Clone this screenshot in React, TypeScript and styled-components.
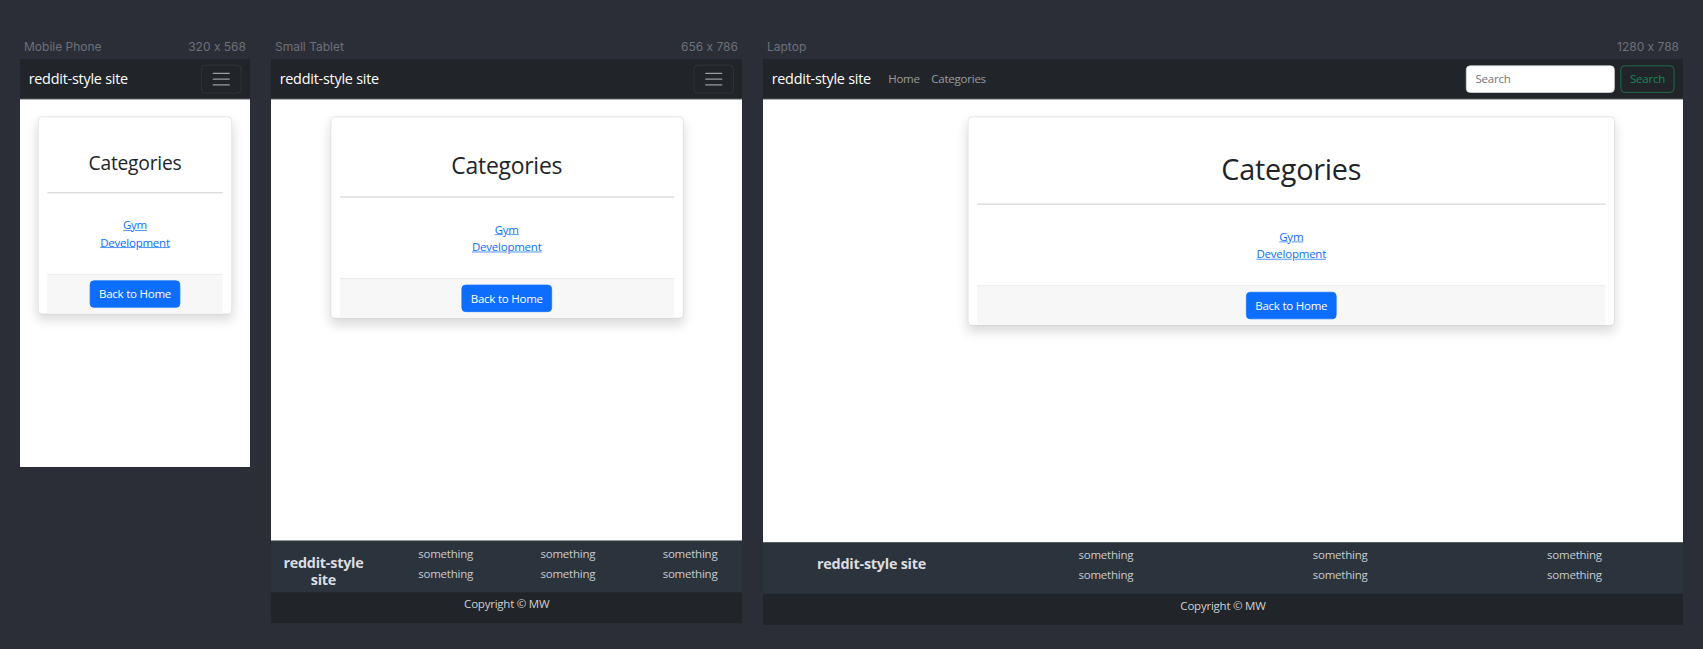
import styled, { createGlobalStyle } from "styled-components";

type Kind = "mobile" | "tablet" | "laptop";

interface IDevice {
  name: string;
  w: number;
  h: number;
  kind: Kind;
}

const SCALE = 0.71875;

const devices: IDevice[] = [
  { name: "Mobile Phone", w: 320, h: 568, kind: "mobile" },
  { name: "Small Tablet", w: 656, h: 786, kind: "tablet" },
  { name: "Laptop", w: 1280, h: 788, kind: "laptop" },
];

// per-device numbers taken from the bootstrap page at each width
const headingSize: Record<Kind, number> = {
  mobile: 26.8,
  tablet: 31.84,
  laptop: 40,
};

const cardWidth: Record<Kind, number> = {
  mobile: 270,
  tablet: 491,
  laptop: 900,
};

const categories = ["Gym", "Development"];

export default function App() {
  return (
    <>
      <GlobalStyle />
      <Workspace>
        {devices.map((d) => (
          <DeviceColumn key={d.name} $w={d.w}>
            <DeviceLabel>
              <span>{d.name}</span>
              <span>
                {d.w} x {d.h}
              </span>
            </DeviceLabel>
            <Screen $w={d.w} $h={d.h}>
              <Viewport $w={d.w} $h={d.h}>
                <SitePage device={d} />
              </Viewport>
            </Screen>
          </DeviceColumn>
        ))}
      </Workspace>
    </>
  );
}

function SitePage({ device }: { device: IDevice }) {
  const wide = device.kind === "laptop";
  return (
    <>
      <Navbar>
        <Brand href="#">reddit-style site</Brand>
        {wide ? (
          <>
            <NavLinks>
              <NavLink href="#">Home</NavLink>
              <NavLink href="#">Categories</NavLink>
            </NavLinks>
            <SearchForm onSubmit={(e) => e.preventDefault()}>
              <SearchInput type="search" placeholder="Search" />
              <SearchBtn type="submit">Search</SearchBtn>
            </SearchForm>
          </>
        ) : (
          <Toggler type="button" aria-label="Toggle navigation">
            <svg width="30" height="30" viewBox="0 0 30 30">
              <path
                d="M4 7h22M4 15h22M4 23h22"
                stroke="rgba(255,255,255,0.55)"
                strokeWidth="2"
                strokeLinecap="round"
              />
            </svg>
          </Toggler>
        )}
      </Navbar>

      <Main>
        <Card $width={cardWidth[device.kind]} $offset={wide ? 285 : null}>
          <CardHeader>
            <Title $size={headingSize[device.kind]}>Categories</Title>
          </CardHeader>
          <Rule />
          <CardBody>
            <CategoryList>
              {categories.map((c) => (
                <li key={c}>
                  <CategoryLink href="#">{c}</CategoryLink>
                </li>
              ))}
            </CategoryList>
          </CardBody>
          <CardFooter>
            <PrimaryBtn type="button">Back to Home</PrimaryBtn>
          </CardFooter>
        </Card>
      </Main>

      {device.kind !== "mobile" && (
        <SiteFooter>
          <FooterRow>
            <FooterBrand>reddit-style site</FooterBrand>
            {[0, 1, 2].map((i) => (
              <FooterCol key={i}>
                <FooterItem>something</FooterItem>
                <FooterItem>something</FooterItem>
              </FooterCol>
            ))}
          </FooterRow>
          <Copyright>Copyright © MW</Copyright>
        </SiteFooter>
      )}
    </>
  );
}

const GlobalStyle = createGlobalStyle`
  html, body {
    margin: 0;
    background: #2b2e37;
  }
  * {
    box-sizing: border-box;
  }
`;

/* ---------- Preview shell ---------- */

const Workspace = styled.div`
  display: flex;
  align-items: flex-start;
  gap: 21px;
  padding: 39px 20px 0 20px;
  min-height: 649px;
`;

const DeviceColumn = styled.div<{ $w: number }>`
  display: flex;
  flex-direction: column;
  gap: 4px;
  width: ${({ $w }) => Math.floor($w * SCALE)}px;
  flex-shrink: 0;
`;

const DeviceLabel = styled.div`
  display: flex;
  justify-content: space-between;
  padding: 0 4px;
  height: 16px;
  line-height: 16px;
  font-family: Inter, "Noto Sans", sans-serif;
  font-size: 12px;
  font-feature-settings: "calt" 0;
  color: #6d707a;
`;

const Screen = styled.div<{ $w: number; $h: number }>`
  width: ${({ $w }) => Math.floor($w * SCALE)}px;
  height: ${({ $h }) => Math.floor($h * SCALE)}px;
  overflow: hidden;
  background: #fff;
`;

const Viewport = styled.div<{ $w: number; $h: number }>`
  width: ${({ $w }) => $w}px;
  height: ${({ $h }) => $h}px;
  transform: scale(${SCALE});
  transform-origin: 0 0;
  overflow: hidden;
  display: flex;
  flex-direction: column;
  background: #fff;
  font-family: "Open Sans", "Noto Sans", sans-serif;
  font-size: 16px;
  line-height: 1.5;
  letter-spacing: -0.02em;
  color: #212529;
`;

/* ---------- Navbar ---------- */

const Navbar = styled.nav`
  display: flex;
  align-items: center;
  height: 56px;
  padding: 8px 12px;
  background: #212529;
  border-bottom: 1px solid #5c6066;
  flex-shrink: 0;
`;

const Brand = styled.a`
  font-size: 20px;
  line-height: 30px;
  color: #fff;
  text-decoration: none;
  margin-right: 16px;
  white-space: nowrap;
`;

const NavLinks = styled.div`
  display: flex;
`;

const NavLink = styled.a`
  padding: 8px;
  color: rgba(255, 255, 255, 0.55);
  text-decoration: none;
`;

const SearchForm = styled.form`
  display: flex;
  gap: 8px;
  margin-left: auto;
`;

const SearchInput = styled.input`
  width: 207px;
  height: 38px;
  padding: 6px 12px;
  font: inherit;
  letter-spacing: inherit;
  color: #212529;
  background: #fff;
  border: 1px solid #dee2e6;
  border-radius: 6px;
  outline: none;

  &::placeholder {
    color: #6c757d;
  }
`;

const SearchBtn = styled.button`
  height: 38px;
  padding: 6px 12px;
  font: inherit;
  letter-spacing: inherit;
  color: #198754;
  background: transparent;
  border: 1px solid #198754;
  border-radius: 6px;
`;

const Toggler = styled.button`
  margin-left: auto;
  display: flex;
  padding: 4px 12px;
  background: transparent;
  border: 1px solid rgba(255, 255, 255, 0.1);
  border-radius: 6px;
`;

/* ---------- Card ---------- */

const Main = styled.main`
  flex: 1;
  padding-top: 24px;
`;

const Card = styled.section<{ $width: number; $offset: number | null }>`
  width: ${({ $width }) => $width}px;
  margin-left: ${({ $offset }) => ($offset === null ? "auto" : `${$offset}px`)};
  margin-right: ${({ $offset }) => ($offset === null ? "auto" : "0")};
  padding: 0 12px;
  background: #fff;
  border: 1px solid rgba(0, 0, 0, 0.12);
  border-radius: 6px;
  box-shadow: 0 8px 16px rgba(0, 0, 0, 0.15);
`;

const CardHeader = styled.div`
  padding: 48px 0 8px 0;
`;

const Title = styled.h1<{ $size: number }>`
  margin: 0;
  font-size: ${({ $size }) => $size}px;
  font-weight: 500;
  line-height: 1.2;
  text-align: center;
`;

const Rule = styled.hr`
  margin: 16px 0;
  border: 0;
  border-top: 2px solid #dcdcdc;
`;

const CardBody = styled.div`
  padding: 16px 0;
`;

const CategoryList = styled.ul`
  list-style: none;
  margin: 0 0 16px 0;
  padding: 0;
  text-align: center;
`;

const CategoryLink = styled.a`
  color: #0d6efd;
  text-decoration: underline;
`;

const CardFooter = styled.div`
  padding: 8px 16px;
  text-align: center;
  background: #f7f7f7;
  border-top: 1px solid #e6e6e6;
`;

const PrimaryBtn = styled.button`
  padding: 6px 12px;
  font: inherit;
  letter-spacing: inherit;
  color: #fff;
  background: #0d6efd;
  border: 1px solid #0d6efd;
  border-radius: 6px;
`;

/* ---------- Site footer ---------- */

const SiteFooter = styled.footer`
  flex-shrink: 0;
  background: #212529;
  border-top: 1px solid #8a8f96;
`;

const FooterRow = styled.div`
  display: grid;
  grid-template-columns: repeat(4, 1fr);
  height: 71px;
  margin: 0 -12px;
  background: #2b333d;
  text-align: center;
`;

const FooterBrand = styled.div`
  padding: 18px 12px 0 12px;
  font-size: 20px;
  font-weight: 700;
  line-height: 24px;
  color: #dcdde0;
`;

const FooterCol = styled.div`
  display: flex;
  flex-direction: column;
  gap: 4px;
  padding: 5px 12px 0 12px;
`;

const FooterItem = styled.span`
  line-height: 24px;
  color: #c9cbcf;
`;

const Copyright = styled.p`
  margin: 0;
  padding: 4px 0 16px 0;
  line-height: 24px;
  text-align: center;
  color: #cfd0d3;
`;
